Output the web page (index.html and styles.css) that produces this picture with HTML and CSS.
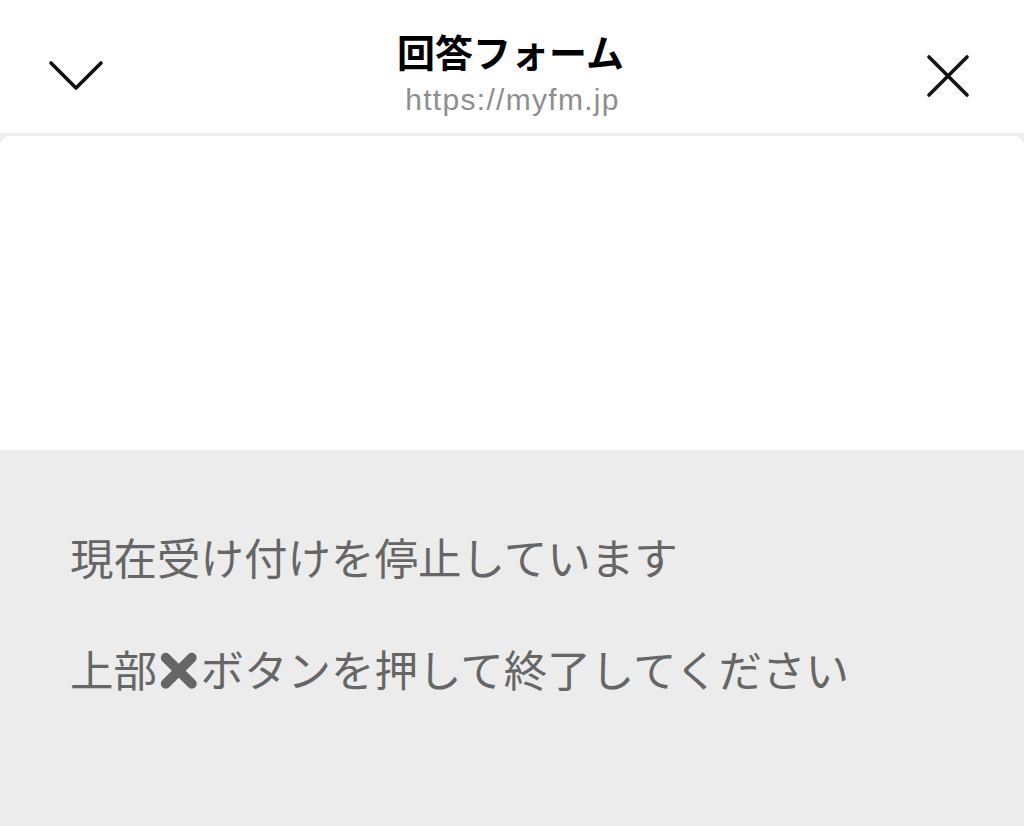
FILE: index.html
```html
<!DOCTYPE html>
<html lang="ja">
<head>
    <meta charset="UTF-8">
    <meta name="viewport" content="width=device-width, initial-scale=1.0">
    <title>回答フォーム</title>
    <link rel="stylesheet" href="styles.css">
</head>
<body>
    <header class="topbar">
        <button class="icon-btn left" aria-label="minimize">
            <svg width="56" height="32" viewBox="0 0 56 32">
                <path d="M3 3 L28 28 L53 3" fill="none" stroke="#111" stroke-width="3.6" stroke-linecap="round" stroke-linejoin="round"/>
            </svg>
        </button>
        <div class="title-box">
            <h1>回答フォーム</h1>
            <div class="url">https://myfm.jp</div>
        </div>
        <button class="icon-btn right" aria-label="close">
            <svg width="44" height="44" viewBox="0 0 44 44">
                <path d="M3 3 L41 41 M41 3 L3 41" fill="none" stroke="#111" stroke-width="3.6" stroke-linecap="round"/>
            </svg>
        </button>
    </header>
    <div class="sheet"></div>
    <main class="notice">
        <p>現在受け付けを停止しています</p>
        <p>上部<span class="mark"><svg viewBox="0 0 40 40" width="1em" height="1em"><path d="M8 8 L32 32 M32 8 L8 32" stroke="#666" stroke-width="9" stroke-linecap="round"/></svg></span>ボタンを押して終了してください</p>
    </main>
</body>
</html>
```

FILE: styles.css
```css
body {
    margin: 0;
    padding: 0;
    background-color: #efefef;
    font-family: "Noto Sans CJK JP", "Liberation Sans", sans-serif;
    height: 826px;
    display: flex;
    flex-direction: column;
}
.topbar {
    background: #FFFFFF;
    height: 133px;
    display: grid;
    grid-template-columns: 1fr auto 1fr;
    align-items: center;
    padding: 0 54px 0 48px;
}
.icon-btn {
    background: none;
    border: none;
    padding: 0;
    display: flex;
    margin-top: 18px;
}
.icon-btn.right {
    justify-self: end;
}
.icon-btn.left {
    justify-self: start;
}
.title-box {
    text-align: center;
    padding-top: 14px;
    margin-left: 3px;
}
.title-box h1 {
    margin: 0;
    font-size: 38px;
    font-weight: 700;
    line-height: 40px;
    color: #000;
}
.url {
    font-family: "Liberation Sans", sans-serif;
    font-size: 30px;
    letter-spacing: 1.3px;
    color: #8e8e8e;
    line-height: 34px;
    margin-top: 12px;
    margin-left: 4px;
}
.sheet {
    background: #FFFFFF;
    margin-top: 3px;
    height: 314px;
    border-radius: 10px 10px 0 0;
}
.notice {
    flex: 1;
    background-color: #ececec;
    padding: 81px 70px 0;
}
.notice p {
    margin: 0 0 60px;
    font-size: 43.5px;
    line-height: 52px;
    color: #666666;
    white-space: nowrap;
}
.mark {
    display: inline-block;
    vertical-align: -0.12em;
}
.mark svg {
    display: block;
}
```
